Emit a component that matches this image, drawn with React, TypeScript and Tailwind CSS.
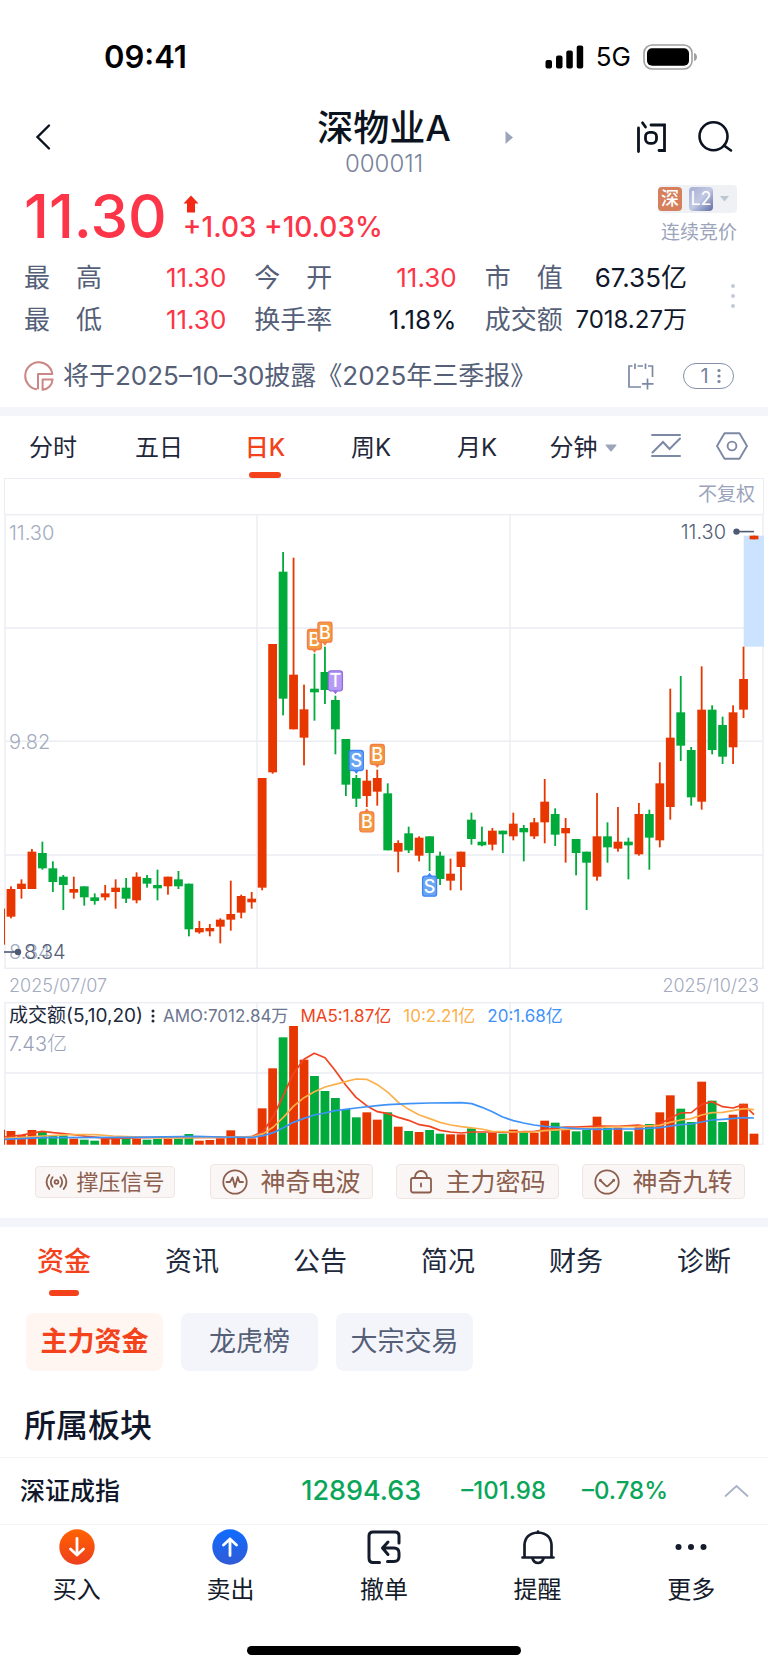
import React from "react";

type Candle = [color: "r" | "g", high: number, top: number, bottom: number, low: number];

const RED = "#e83600";
const GREEN = "#00aa3b";

/* Candles in thirds of a chart pixel, measured downwards. */
const CANDLES: Candle[] = [
  ["r", 1160, 1168, 1251, 1256],
  ["r", 1139, 1152, 1168, 1197],
  ["r", 1048, 1056, 1168, 1168],
  ["g", 1026, 1060, 1106, 1110],
  ["g", 1085, 1106, 1147, 1177],
  ["g", 1126, 1131, 1156, 1231],
  ["r", 1131, 1168, 1179, 1197],
  ["g", 1160, 1160, 1193, 1218],
  ["g", 1181, 1193, 1204, 1215],
  ["r", 1156, 1181, 1193, 1202],
  ["r", 1139, 1164, 1177, 1227],
  ["g", 1135, 1164, 1197, 1210],
  ["r", 1118, 1131, 1202, 1211],
  ["g", 1126, 1135, 1152, 1164],
  ["g", 1110, 1156, 1166, 1202],
  ["r", 1131, 1131, 1160, 1185],
  ["g", 1114, 1139, 1160, 1168],
  ["g", 1152, 1152, 1289, 1310],
  ["r", 1264, 1285, 1298, 1302],
  ["r", 1273, 1285, 1295, 1310],
  ["r", 1256, 1260, 1281, 1331],
  ["r", 1143, 1243, 1260, 1293],
  ["r", 1185, 1189, 1239, 1256],
  ["r", 1177, 1197, 1208, 1227],
  ["r", 835, 835, 1164, 1172],
  ["r", 433, 433, 818, 822],
  ["g", 157, 216, 597, 647],
  ["r", 174, 525, 689, 689],
  ["r", 555, 629, 714, 797],
  ["g", 462, 567, 578, 663],
  ["g", 441, 517, 571, 613],
  ["g", 588, 601, 689, 764],
  ["g", 718, 718, 855, 889],
  ["g", 826, 835, 897, 922],
  ["r", 810, 843, 889, 922],
  ["r", 810, 835, 876, 918],
  ["g", 851, 881, 1052, 1052],
  ["r", 1022, 1030, 1056, 1118],
  ["g", 981, 1001, 1052, 1060],
  ["r", 1010, 1014, 1068, 1085],
  ["g", 1010, 1010, 1060, 1114],
  ["g", 1056, 1068, 1138, 1156],
  ["r", 1077, 1122, 1143, 1172],
  ["r", 1056, 1056, 1102, 1172],
  ["g", 939, 960, 1018, 1035],
  ["g", 981, 1026, 1037, 1040],
  ["r", 985, 993, 1035, 1052],
  ["g", 993, 993, 1004, 1060],
  ["r", 939, 972, 1010, 1022],
  ["g", 976, 985, 998, 1085],
  ["r", 955, 968, 1010, 1018],
  ["r", 838, 906, 968, 1031],
  ["g", 926, 943, 1005, 1039],
  ["r", 955, 985, 1001, 1089],
  ["g", 1018, 1018, 1060, 1127],
  ["g", 1056, 1056, 1089, 1231],
  ["r", 880, 1010, 1131, 1143],
  ["g", 968, 1010, 1043, 1089],
  ["r", 922, 1026, 1047, 1056],
  ["g", 1014, 1026, 1037, 1139],
  ["r", 910, 943, 1064, 1068],
  ["g", 930, 943, 1014, 1110],
  ["r", 788, 851, 1022, 1043],
  ["r", 567, 714, 922, 960],
  ["g", 529, 638, 738, 784],
  ["g", 742, 751, 893, 918],
  ["r", 500, 630, 906, 930],
  ["g", 617, 630, 751, 764],
  ["g", 651, 676, 771, 793],
  ["r", 617, 638, 743, 793],
  ["r", 441, 538, 630, 655],
  ["r", 108, 108, 119, 119],
];

/* Tops of the turnover bars, same unit, one per candle. */
const VOLUMES = [
  514, 526, 511, 517, 526, 527, 537, 540, 543, 536, 535, 536, 537, 540, 538, 537, 537, 523, 543, 541, 536, 512, 535,
  536, 446, 326, 233, 199, 300, 349, 394, 415, 448, 473, 458, 480, 458, 501, 514, 517, 511, 522, 524, 524, 506, 520,
  520, 522, 510, 515, 519, 483, 489, 511, 515, 511, 471, 505, 504, 515, 503, 493, 458, 407, 447, 487, 366, 423, 487,
  465, 432, 522,
];

type Point = [number, number];

const MA5: Point[] = [
  [14, 532], [65, 526], [127, 515], [160, 519], [205, 523], [260, 530], [330, 537], [420, 534], [500, 533], [600, 533],
  [700, 533], [755, 531], [790, 515], [820, 470], [850, 408], [880, 342], [912, 299], [943, 281], [975, 294],
  [1005, 332], [1037, 376], [1068, 413], [1100, 438], [1132, 456], [1164, 462], [1195, 473], [1226, 482], [1258, 495],
  [1289, 500], [1320, 512], [1352, 517], [1384, 520], [1415, 517], [1477, 517], [1540, 518], [1571, 516], [1602, 516],
  [1634, 510], [1665, 506], [1696, 502], [1728, 502], [1774, 500], [1804, 499], [1854, 500], [1914, 496], [1948, 501],
  [1979, 494], [2010, 475], [2042, 460], [2074, 459], [2105, 434], [2136, 426], [2168, 441], [2199, 445], [2231, 435],
  [2262, 465],
];

const MA10: Point[] = [
  [14, 536], [130, 529], [205, 525], [285, 525], [340, 529], [420, 532], [480, 535], [560, 535], [630, 533],
  [760, 531], [790, 522], [820, 502], [850, 473], [880, 440], [912, 414], [943, 396], [975, 382], [1005, 374],
  [1037, 366], [1068, 358], [1100, 359], [1132, 375], [1164, 398], [1195, 428], [1226, 449], [1258, 466], [1289, 477],
  [1320, 488], [1352, 496], [1384, 501], [1444, 508], [1477, 515], [1540, 517], [1602, 517], [1634, 513], [1696, 509],
  [1759, 506], [1824, 502], [1914, 500], [1979, 497], [2010, 488], [2042, 481], [2074, 477], [2105, 466], [2136, 459],
  [2168, 458], [2199, 453], [2231, 447], [2262, 450],
];

const MA20: Point[] = [
  [14, 539], [130, 534], [400, 533], [590, 530], [660, 532], [760, 533], [790, 528], [820, 519], [850, 504],
  [880, 488], [912, 476], [943, 466], [975, 460], [1005, 453], [1037, 449], [1068, 445], [1132, 438], [1164, 435],
  [1226, 432], [1289, 430], [1384, 429], [1415, 432], [1446, 443], [1477, 456], [1508, 472], [1540, 483], [1571, 490],
  [1602, 496], [1634, 500], [1665, 502], [1728, 507], [1791, 509], [1854, 508], [1914, 508], [1979, 504], [2042, 495],
  [2074, 493], [2105, 487], [2136, 481], [2168, 479], [2231, 474], [2262, 475],
];

type Marker = { index: number; top: number; below?: boolean; letter: string; fill: string; stroke: string };

const ORANGE = { fill: "#f19a3f", stroke: "#f47c45" };
const BLUE = { fill: "#6aa5f2", stroke: "#3f83f8" };
const PURPLE = { fill: "#b79af5", stroke: "#8f6fdc" };

const MARKERS: Marker[] = [
  { index: 29, top: 388, letter: "B", ...ORANGE },
  { index: 30, top: 366, letter: "B", ...ORANGE },
  { index: 31, top: 512, letter: "T", ...PURPLE },
  { index: 33, top: 751, letter: "S", ...BLUE },
  { index: 35, top: 733, letter: "B", ...ORANGE },
  { index: 34, top: 935, below: true, letter: "B", ...ORANGE },
  { index: 40, top: 1128, below: true, letter: "S", ...BLUE },
];

const xAt = (i: number) => 11 + (i * 743) / 71;
const priceY = (v: number) => (v - 43) / 3;
const volumeY = (v: number) => (v - 127) / 3;
const toPoints = (line: Point[]) => line.map(([x, y]) => `${x / 3},${volumeY(y)}`).join(" ");

function MarkerFlag({ index, top, below, letter, fill, stroke }: Marker) {
  const x = xAt(index);
  const y = priceY(top);
  const tip = below ? `M${x - 3} ${y + 1}L${x} ${y - 3}L${x + 3} ${y + 1}Z` : `M${x - 3} ${y + 20}L${x} ${y + 24}L${x + 3} ${y + 20}Z`;
  return (
    <g>
      <path d={tip} fill={stroke} />
      <rect x={x - 7} y={y + 0.5} width="14" height="20" rx="2.5" fill={fill} stroke={stroke} strokeWidth="1.3" />
      <text x={x} y={y + 17} textAnchor="middle" className="fill-white text-[18px] font-medium">
        {letter}
      </text>
    </g>
  );
}

function PriceChart() {
  return (
    <svg viewBox="0 0 768 455" className="block h-auto w-full" role="img" aria-label="日K线图">
      <g stroke="#ebedf3" strokeWidth="1.4" fill="none">
        <rect x="5" y="0.7" width="758" height="453.6" />
        <path d="M5 114H763M5 227.3H763M5 341H763M257 0V454M510 0V454" />
      </g>
      <g className="fill-[#a3abc0] text-[20px] font-light">
        <text x="9" y="26">11.30</text>
        <text x="9" y="235">9.82</text>
        <text x="9" y="445">8.34</text>
      </g>
      <rect x="743.7" y={priceY(108)} width="20.3" height="111" fill="#cbe3ff" />
      <rect x="4" y={priceY(1227)} width="1" height="36" fill={RED} />
      {CANDLES.map(([color, high, top, bottom, low], i) => {
        const fill = color === "r" ? RED : GREEN;
        return (
          <g key={i} fill={fill}>
            <rect x={xAt(i) - 0.9} y={priceY(high)} width="1.8" height={(low - high) / 3} />
            <rect x={xAt(i) - 4.4} y={priceY(top)} width="8.8" height={(bottom - top) / 3} />
          </g>
        );
      })}
      {MARKERS.map((m) => (
        <MarkerFlag key={m.index} {...m} />
      ))}
      <g className="fill-[#535d76] text-[20px] font-light">
        <text x="726" y="25" textAnchor="end">11.30</text>
        <text x="24" y="445">8.34</text>
      </g>
      <g fill="#4f5a73" stroke="#4f5a73" strokeWidth="1.6">
        <circle cx="736.5" cy="17.6" r="2.4" />
        <path d="M736 17.6H754" />
        <circle cx="18" cy="438" r="2.4" />
        <path d="M4 438H18" />
      </g>
    </svg>
  );
}

function VolumeChart() {
  return (
    <svg viewBox="0 0 768 143" className="block h-auto w-full" role="img" aria-label="成交额柱状图">
      <g stroke="#ebedf3" strokeWidth="1.4" fill="none">
        <rect x="5" y="0.7" width="758" height="141.5" />
        <path d="M5 71H763M257 0V142M510 0V142" />
      </g>
      <rect x="4" y={volumeY(510)} width="1" height="15" fill={RED} />
      {VOLUMES.map((top, i) => (
        <rect
          key={i}
          x={xAt(i) - 4.4}
          y={volumeY(top)}
          width="8.8"
          height={(555 - top) / 3}
          fill={CANDLES[i][0] === "r" ? RED : GREEN}
        />
      ))}
      <g fill="none" strokeWidth="1.7" strokeLinejoin="round">
        <polyline points={toPoints(MA5)} stroke="#f04420" />
        <polyline points={toPoints(MA10)} stroke="#fbb04c" />
        <polyline points={toPoints(MA20)} stroke="#3f93f8" />
      </g>
    </svg>
  );
}

function StatusBar() {
  return (
    <div className="flex h-[100px] items-center justify-between pt-[14px] pr-[70px] pl-[104px] text-black">
      <span className="text-[31px] leading-9 font-semibold">09:41</span>
      <div className="flex items-center gap-3">
        <svg width="39" height="24" viewBox="0 0 39 24" aria-hidden="true">
          <rect x="0.5" y="15" width="6.5" height="8.5" rx="2" />
          <rect x="11" y="10.5" width="6.5" height="13" rx="2" />
          <rect x="21.3" y="5.5" width="6.5" height="18" rx="2" />
          <rect x="31.7" y="0.5" width="6.5" height="23" rx="2" />
        </svg>
        <span className="text-[26px] leading-8">5G</span>
        <svg width="55" height="26" viewBox="0 0 55 26" aria-hidden="true">
          <rect x="1" y="1" width="48" height="24" rx="8" fill="none" stroke="#a0a0a0" strokeWidth="1.6" />
          <rect x="4" y="4.2" width="42" height="17.6" rx="5" />
          <path d="M51 9c4 1 4 7 0 8z" fill="#a0a0a0" />
        </svg>
      </div>
    </div>
  );
}

function Header() {
  return (
    <header className="grid h-20 grid-cols-[1fr_auto_1fr] items-center text-[#0c1320]">
      <button type="button" aria-label="返回" className="flex w-16 items-center justify-end pr-3 pb-[6px]">
        <svg width="18" height="28" viewBox="0 0 18 28" fill="none" stroke="currentColor" strokeWidth="2.4" strokeLinecap="round" aria-hidden="true">
          <path d="M15 2.5L3.5 14L15 25.5" />
        </svg>
      </button>
      <div className="pt-[6px] text-center">
        <h1 className="text-[36px] leading-[42px] font-medium">深物业A</h1>
        <p className="text-[24px] leading-[30px] font-light text-[#78829c]">000011</p>
      </div>
      <div className="flex items-center justify-between pr-[35px] pb-[6px] pl-[54px]">
        <button type="button" aria-label="下一只" className="py-2">
          <svg width="8" height="13" viewBox="0 0 8 13" fill="#9ba5bb" aria-hidden="true">
            <path d="M0.500 0L8 6.500L0.500 13Z" />
          </svg>
        </button>
        <div className="flex items-center gap-7">
          <button type="button" aria-label="问">
            <svg width="34" height="34" viewBox="0 0 34 34" fill="none" stroke="currentColor" strokeWidth="2.8" strokeLinecap="round" aria-hidden="true">
              <path d="M3.5 8V31.5M7.5 2.8L10.5 7M16 5H29.5V30.5H24" />
              <rect x="10.5" y="12.3" width="11" height="11" rx="4.2" />
            </svg>
          </button>
          <button type="button" aria-label="搜索">
            <svg width="36" height="34" viewBox="0 0 36 34" fill="none" stroke="currentColor" strokeWidth="2.6" strokeLinecap="round" aria-hidden="true">
              <circle cx="16.5" cy="16.3" r="14" />
              <path d="M27 25.5L34 30.5" />
            </svg>
          </button>
        </div>
      </div>
    </header>
  );
}

function Quote() {
  return (
    <section className="flex h-[77px] items-start justify-between pr-[31px] pl-6">
      <div className="flex items-start gap-4 text-[#fd3548]">
        <span className="text-[60px] leading-[72px] font-medium">11.30</span>
        <div className="pt-[15px]">
          <svg width="16" height="18" viewBox="0 0 16 18" fill="#f32815" className="block" aria-hidden="true">
            <path d="M8 0.5L15.5 8.5H12V17.5H4V8.5H0.5Z" />
          </svg>
          <p className="text-[28px] leading-7 font-medium">+1.03 +10.03%</p>
        </div>
      </div>
      <div className="flex flex-col items-end gap-2 pt-[5px]">
        <button type="button" className="flex h-7 items-center gap-[7px] rounded-sm bg-[#f0f1f4] pr-2 text-white">
          <span className="flex size-6 items-center justify-center rounded bg-[#d67f5c] text-[18px] leading-6 font-medium">深</span>
          <span className="flex size-6 items-center justify-center rounded-sm bg-linear-135 from-[#a5aed3] via-[#c3c9e3] to-[#5e6ca4] text-[18px] leading-6">
            L2
          </span>
          <svg width="9" height="6" viewBox="0 0 9 6" fill="#bcc7d6" aria-hidden="true">
            <path d="M0 0H9L4.5 5.5Z" />
          </svg>
        </button>
        <span className="text-[19px] leading-6 text-[#9ba4bb]">连续竞价</span>
      </div>
    </section>
  );
}

const STATS = [
  { label: "最　高", value: "11.30", up: true },
  { label: "今　开", value: "11.30", up: true },
  { label: "市　值", value: "67.35亿" },
  { label: "最　低", value: "11.30", up: true },
  { label: "换手率", value: "1.18%" },
  { label: "成交额", value: "7018.27万" },
];

/* Long values drop one size so that they stay clear of their label. */
const valueSize = (value: string) => (value.length > 7 ? "text-[24px]" : "text-[26px]");

function Stats() {
  return (
    <section className="flex items-center justify-between pr-8 pl-6">
      <dl className="grid flex-1 grid-cols-3 gap-x-7 text-[26px] leading-[42px]">
        {STATS.map((s) => (
          <div key={s.label} className="flex justify-between whitespace-nowrap">
            <dt className="text-[#555f78]">{s.label}</dt>
            <dd className={`${valueSize(s.value)} leading-[42px] ${s.up ? "text-[#fd3548]" : "text-[#10172a]"}`}>{s.value}</dd>
          </div>
        ))}
      </dl>
      <button type="button" aria-label="更多行情" className="flex w-[49px] justify-end pb-[6px]">
        <svg width="6" height="26" viewBox="0 0 6 26" fill="#c3cad8" aria-hidden="true">
          <circle cx="3" cy="3" r="2" />
          <circle cx="3" cy="13" r="2" />
          <circle cx="3" cy="23" r="2" />
        </svg>
      </button>
    </section>
  );
}

function Notice() {
  return (
    <section className="flex h-[66px] items-center pt-1 pr-[34px] pl-6">
      <svg width="30" height="30" viewBox="0 0 30 30" fill="none" stroke="#cb8784" strokeWidth="2" strokeLinejoin="round" aria-hidden="true">
        <path d="M13 28.3A13.6 13.6 0 1 1 28.3 13H14V28.3" />
        <path d="M18.6 18.5H28.6A11 11 0 0 1 18.6 28.8Z" />
      </svg>
      <p className="ml-[9px] flex-1 text-[26px] leading-9 whitespace-nowrap text-[#555f78]">
        将于2025–10–30披露《2025年三季报》
      </p>
      <button type="button" aria-label="加入日历">
        <svg width="28" height="28" viewBox="0 0 28 28" fill="none" stroke="#7c88a4" strokeWidth="1.7" aria-hidden="true">
          <path d="M8 1.5V7M18.5 1.5V7M10.5 4H16M5.5 4H2V25H14M21 4H25.5V15M20.5 16.5V27.5M15 21.8H26.5" />
        </svg>
      </button>
      <button
        type="button"
        aria-label="公告数 1"
        className="ml-7 flex h-[26px] w-[51px] items-center justify-center gap-2 rounded-full border-[1.5px] border-[#8490aa] pl-1 text-[20px] leading-6 text-[#78839d]"
      >
        1
        <svg width="4" height="16" viewBox="0 0 4 16" fill="currentColor" aria-hidden="true">
          <circle cx="2" cy="2.5" r="1.6" />
          <circle cx="2" cy="8" r="1.6" />
          <circle cx="2" cy="13.5" r="1.6" />
        </svg>
      </button>
    </section>
  );
}

const PERIODS = ["分时", "五日", "日K", "周K", "月K"];

function PeriodTabs() {
  return (
    <nav className="grid h-[62px] grid-cols-[repeat(6,106fr)_60fr_72fr] text-[24px] leading-8 text-[#1f273b]">
      {PERIODS.map((p) => {
        const active = p === "日K";
        return (
          <button key={p} type="button" className={active ? "flex flex-col items-center justify-between pt-4 font-medium text-[#f3421c]" : "flex flex-col items-center pt-4"}>
            {p}
            {active && <span className="h-[6px] w-8 rounded-full bg-[#f3421c]" />}
          </button>
        );
      })}
      <button type="button" className="flex items-start justify-center gap-[7px] pt-4">
        分钟
        <svg width="12" height="8" viewBox="0 0 12 8" fill="#9ba5bb" className="mt-3" aria-hidden="true">
          <path d="M1 0.5H11Q12 0.5 11.3 1.5L6.8 7Q6 8 5.2 7L0.7 1.5Q0 0.5 1 0.5Z" />
        </svg>
      </button>
      <button type="button" aria-label="画线" className="flex items-start justify-center pt-[17px]">
        <svg width="30" height="26" viewBox="0 0 30 26" fill="none" stroke="#7c88a4" strokeWidth="2" strokeLinecap="round" aria-hidden="true">
          <path d="M1 2H29M1 23H29M1.5 19.5L12 9L18.5 16L29 5.5" />
        </svg>
      </button>
      <button type="button" aria-label="设置" className="flex items-start justify-center pt-4">
        <svg width="32" height="28" viewBox="0 0 32 28" fill="none" stroke="#7c88a4" strokeWidth="1.9" strokeLinejoin="round" aria-hidden="true">
          <path d="M8.5 1.2H23.5L31 14L23.5 26.8H8.5L1 14Z" />
          <circle cx="16" cy="14" r="4.4" />
        </svg>
      </button>
    </nav>
  );
}

function Charts() {
  return (
    <section>
      <div className="mx-[4px] h-9 border-x border-t border-[#ebedf3] pr-2 text-right">
        <button type="button" className="text-[19px] leading-8 text-[#9ba4bb]">不复权</button>
      </div>
      <PriceChart />
      <div className="flex h-[33px] items-center justify-between px-[9px] pb-px text-[18px] font-light text-[#a3abc0]">
        <span>2025/07/07</span>
        <span>2025/10/23</span>
      </div>
      <div className="relative">
        <VolumeChart />
        <div className="absolute top-0 left-[9px] flex items-center text-[17px] leading-7 whitespace-nowrap">
          <span className="text-[19px] text-[#20283c]">成交额(5,10,20)</span>
          <svg width="4" height="14" viewBox="0 0 4 14" fill="#20283c" className="mx-2" aria-hidden="true">
            <circle cx="2" cy="2" r="1.5" />
            <circle cx="2" cy="7" r="1.5" />
            <circle cx="2" cy="12" r="1.5" />
          </svg>
          <span className="text-[#6c7690]">AMO:7012.84万</span>
          <span className="ml-3 text-[#f04420]">MA5:1.87亿</span>
          <span className="ml-3 text-[#fbb04c]">10:2.21亿</span>
          <span className="ml-3 text-[#3f93f8]">20:1.68亿</span>
        </div>
        <span className="absolute top-[28px] left-2 text-[20px] leading-7 font-light text-[#98a1b7]">7.43亿</span>
      </div>
    </section>
  );
}

const ICON = {
  fill: "none",
  stroke: "currentColor",
  strokeWidth: 1.8,
  strokeLinecap: "round" as const,
  strokeLinejoin: "round" as const,
  "aria-hidden": true,
};

function Signals() {
  const chip = "flex items-center justify-center rounded border border-[#efe6e4] bg-[#faf6f5] whitespace-nowrap";
  const large = "h-[35px] gap-3 text-[25px] leading-8";
  return (
    <section className="grid h-[73px] grid-cols-[152fr_163fr_163fr_163fr] items-center gap-x-[23px] pr-[23px] pl-[35px] text-[#8c5e4d]">
      <button type="button" className={`${chip} mr-3 h-8 gap-2 text-[22px] leading-7`}>
        <svg width="23" height="18" viewBox="0 0 23 18" {...ICON}>
          <circle cx="11.5" cy="9" r="1.9" />
          <path d="M4.3 2Q-1.2 9 4.3 16M7.6 4.3Q4 9 7.6 13.7M18.7 2Q24.2 9 18.7 16M15.4 4.3Q19 9 15.4 13.7" />
        </svg>
        撑压信号
      </button>
      <button type="button" className={`${chip} ${large}`}>
        <svg width="26" height="26" viewBox="0 0 26 26" {...ICON}>
          <circle cx="13" cy="13" r="11.7" />
          <path d="M4.5 13H8L10.5 8.5L13 18L15.8 8L17.5 13H21" />
        </svg>
        神奇电波
      </button>
      <button type="button" className={`${chip} ${large}`}>
        <svg width="24" height="26" viewBox="0 0 24 26" {...ICON}>
          <rect x="2" y="9" width="20" height="14.5" rx="2" />
          <path d="M6 9V8A6 6 0 0 1 18 8V9M12 14.5V17.5" />
        </svg>
        主力密码
      </button>
      <button type="button" className={`${chip} ${large}`}>
        <svg width="26" height="26" viewBox="0 0 26 26" {...ICON}>
          <circle cx="13" cy="13" r="11.7" />
          <path d="M6.5 11.5L12 16.8Q13 17.6 14 16.8L19.5 11.5" />
          <path d="M6.3 11.2V11.3M19.7 11.2V11.3" strokeWidth="3" />
        </svg>
        神奇九转
      </button>
    </section>
  );
}

const SECTIONS = ["资金", "资讯", "公告", "简况", "财务", "诊断"];

function InfoTabs() {
  return (
    <nav className="grid grid-cols-6 pt-[17px] text-[27px] leading-9 text-[#20283c]">
      {SECTIONS.map((s) => {
        const active = s === "资金";
        return (
          <button key={s} type="button" className={active ? "flex flex-col items-center font-medium text-[#f3421c]" : "flex flex-col items-center"}>
            {s}
            {active && <span className="mt-[10px] h-[6px] w-[30px] rounded-full bg-[#f3421c]" />}
          </button>
        );
      })}
    </nav>
  );
}

function FundChips() {
  const base = "h-[58px] w-[137px] rounded-lg text-[27px] leading-9 whitespace-nowrap";
  return (
    <div className="flex gap-[18px] px-[26px] pt-[17px]">
      <button type="button" className={`${base} bg-[#fff6f1] font-bold text-[#f3421c]`}>主力资金</button>
      <button type="button" className={`${base} bg-[#f4f5fa] text-[#555f78]`}>龙虎榜</button>
      <button type="button" className={`${base} bg-[#f4f5fa] text-[#555f78]`}>大宗交易</button>
    </div>
  );
}

function IndexBar() {
  return (
    <section className="flex h-[68px] items-center border-y border-[#f3f4f8] pr-[19px] pl-5 font-medium text-[#09a65a]">
      <span className="flex-1 text-[25px] leading-8 text-[#10172a]">深证成指</span>
      <span className="text-[27px] leading-8">12894.63</span>
      <span className="ml-10 text-[24px] leading-8">–101.98</span>
      <span className="ml-9 text-[24px] leading-8">–0.78%</span>
      <button type="button" aria-label="展开指数" className="ml-14">
        <svg width="25" height="14" viewBox="0 0 25 14" fill="none" stroke="#a9b2c8" strokeWidth="1.8" strokeLinecap="round" aria-hidden="true">
          <path d="M1.5 12L12.5 2L23.5 12" />
        </svg>
      </button>
    </section>
  );
}

function ActionIcon({ name }: { name: string }) {
  if (name === "买入" || name === "卖出") {
    const buy = name === "买入";
    return (
      <svg width="36" height="36" viewBox="0 0 36 36" aria-hidden="true">
        <defs>
          <linearGradient id={buy ? "buy" : "sell"} x1="0" y1="0" x2="0" y2="1">
            <stop offset="0" stopColor={buy ? "#ff6200" : "#0f6cff"} />
            <stop offset="1" stopColor={buy ? "#ee3f1d" : "#305bd6"} />
          </linearGradient>
        </defs>
        <circle cx="18" cy="18" r="17.7" fill={buy ? "url(#buy)" : "url(#sell)"} />
        <path
          d={buy ? "M18 9.5V26M11.5 20L18 26L24.5 20" : "M18 26.5V10M11.5 16L18 10L24.5 16"}
          fill="none"
          stroke="#fff"
          strokeWidth="2.8"
          strokeLinecap="round"
          strokeLinejoin="round"
        />
      </svg>
    );
  }
  const line = { fill: "none", stroke: "currentColor", strokeWidth: 3, strokeLinecap: "round" as const, strokeLinejoin: "round" as const };
  if (name === "撤单") {
    return (
      <svg width="36" height="36" viewBox="0 0 36 36" aria-hidden="true" {...line}>
        <path d="M33 14V7Q33 3 29 3H7Q3 3 3 7V29Q3 33.5 7 33.5H13.5" />
        <path d="M22 13L16.5 19L22 25.5M17 19H28Q33 19 33 24V27.5Q33 32.5 28 32.5H21.5" />
      </svg>
    );
  }
  if (name === "提醒") {
    return (
      <svg width="36" height="36" viewBox="0 0 36 36" aria-hidden="true" {...line} strokeWidth="2.7">
        <path d="M2.5 28.5H33.5M4.5 28.5V16Q5 4.500 18 3.5Q31 4.5 31.5 16V28.5M18 2.5V3.5M12.5 29.5Q14 34 18 34Q22 34 23.5 29.5" />
      </svg>
    );
  }
  return (
    <svg width="36" height="36" viewBox="0 0 36 36" fill="currentColor" aria-hidden="true">
      <circle cx="5.5" cy="18" r="3" />
      <circle cx="18" cy="18" r="3" />
      <circle cx="30.5" cy="18" r="3" />
    </svg>
  );
}

const ACTIONS = ["买入", "卖出", "撤单", "提醒", "更多"];

function ActionBar() {
  return (
    <footer>
      <nav className="grid grid-cols-5 pt-1 text-[24px] leading-8 text-[#141b2b]">
        {ACTIONS.map((a) => (
          <button key={a} type="button" className="flex flex-col items-center gap-[9px]">
            <ActionIcon name={a} />
            {a}
          </button>
        ))}
      </nav>
      <div className="flex justify-center pt-10 pb-[14px]">
        <div className="h-[9px] w-[274px] rounded-full bg-black" />
      </div>
    </footer>
  );
}

export default function App() {
  return (
    <main className="min-h-screen bg-white font-['Inter','Noto_Sans_CJK_SC',sans-serif]">
      <StatusBar />
      <Header />
      <Quote />
      <Stats />
      <Notice />
      <div className="h-[9px] bg-[#f3f5fa]" />
      <PeriodTabs />
      <Charts />
      <Signals />
      <div className="h-[9px] bg-[#f3f5fa]" />
      <InfoTabs />
      <FundChips />
      <h2 className="px-6 pt-8 pb-2 text-[32px] leading-[46px] font-medium text-[#10172a]">所属板块</h2>
      <IndexBar />
      <ActionBar />
    </main>
  );
}
